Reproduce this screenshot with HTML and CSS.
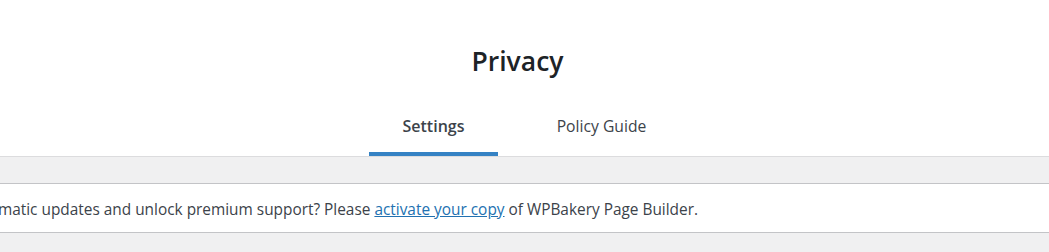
FILE: index.html
```html
<!DOCTYPE html>
<html lang="en">
<head>
<meta charset="utf-8">
<title>Privacy</title>
<link rel="stylesheet" href="styles.css">
</head>
<body>
<div class="header">
  <h1 class="title">Privacy</h1>
  <nav class="tabs">
    <a class="tab tab-active" href="#">Settings</a>
    <a class="tab" href="#">Policy Guide</a>
  </nav>
</div>
<div class="band"></div>
<div class="notice">
  <div class="notice-track">
    <p class="notice-text">Would you like to receive automatic updates and unlock premium support? Please <a class="notice-link" href="#">activate your copy</a> of WPBakery Page Builder.</p>
  </div>
</div>
<div class="rest"></div>
</body>
</html>
```

FILE: styles.css
```css
html, body {
  margin: 0;
  padding: 0;
  background: #f0f0f1;
  overflow: hidden;
}
body {
  font-family: "Open Sans", "Noto Sans", sans-serif;
  color: #3c434a;
  width: 1049px;
  height: 252px;
}
.header {
  background: #fff;
  border-bottom: 1px solid #dcdcde;
  display: flex;
  flex-direction: column;
  align-items: center;
  padding-right: 14px;
  height: 156px;
  box-sizing: content-box;
}
.title {
  margin: 41px 0 0;
  font-size: 26.5px;
  font-weight: 600;
  line-height: 40px;
  color: #1d2327;
}
.tabs {
  margin-top: 27px;
  display: grid;
  grid-template-columns: 129px 129px;
  column-gap: 39px;
}
.tab {
  display: block;
  text-align: center;
  text-decoration: none;
  color: #3c434a;
  font-size: 16px;
  line-height: 24px;
  padding: 6px 0 18px;
}
.tab + .tab {
  font-size: 15.7px;
}
.tab-active {
  font-weight: 600;
  box-shadow: inset 0 -4px #3582c4;
}
.band {
  height: 26px;
}
.notice {
  background: #fff;
  border-top: 1px solid #c3c4c7;
  border-bottom: 1px solid #c3c4c7;
  height: 48px;
  overflow: hidden;
}
.notice-track {
  width: 698px;
  height: 48px;
  padding-top: 3px;
  box-sizing: border-box;
  display: flex;
  justify-content: flex-end;
  align-items: center;
}
.notice-text {
  margin: 0;
  white-space: nowrap;
  font-size: 15.4px;
  line-height: 24px;
  color: #3c434a;
  flex-shrink: 0;
}
.notice-link {
  color: #2271b1;
  text-decoration: underline;
}
.rest {
  height: 20px;
}
```
